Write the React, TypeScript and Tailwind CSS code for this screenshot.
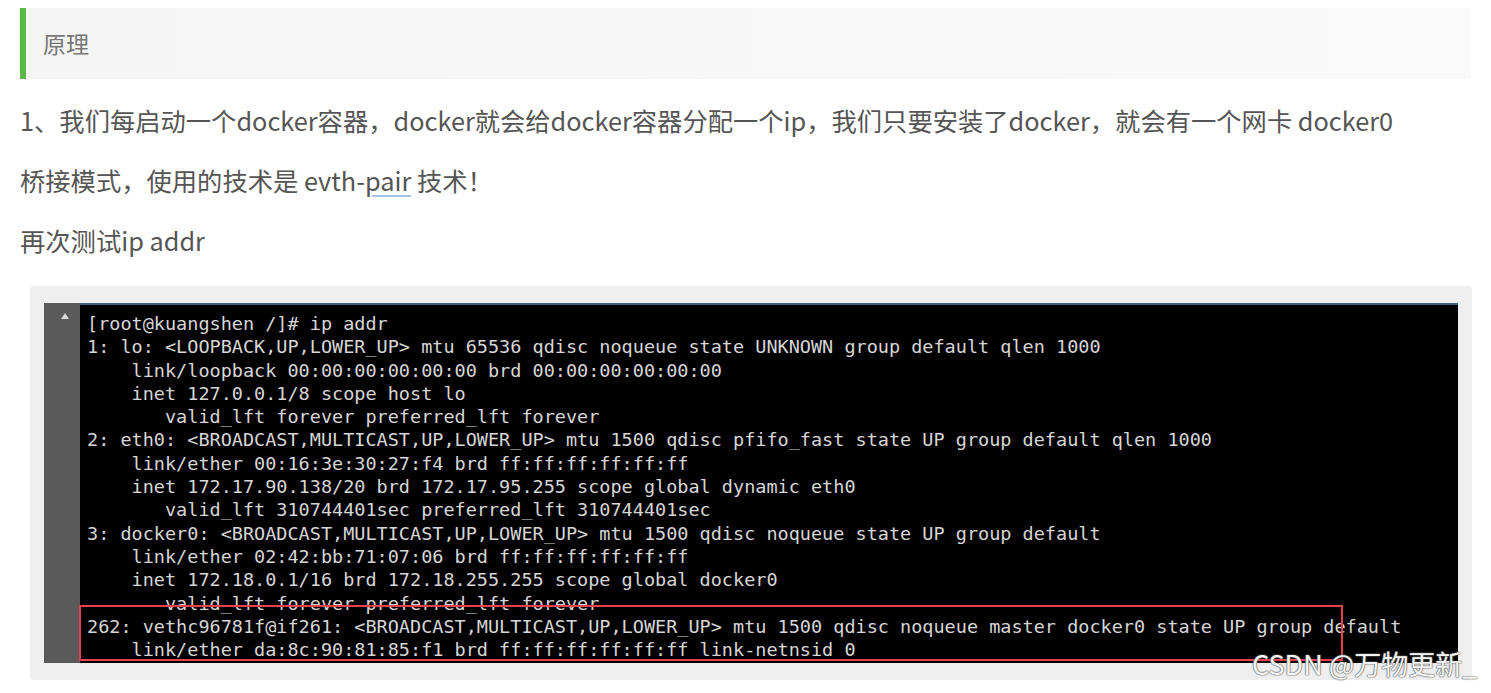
const lines = [
  "[root@kuangshen /]# ip addr",
  "1: lo: <LOOPBACK,UP,LOWER_UP> mtu 65536 qdisc noqueue state UNKNOWN group default qlen 1000",
  "    link/loopback 00:00:00:00:00:00 brd 00:00:00:00:00:00",
  "    inet 127.0.0.1/8 scope host lo",
  "       valid_lft forever preferred_lft forever",
  "2: eth0: <BROADCAST,MULTICAST,UP,LOWER_UP> mtu 1500 qdisc pfifo_fast state UP group default qlen 1000",
  "    link/ether 00:16:3e:30:27:f4 brd ff:ff:ff:ff:ff:ff",
  "    inet 172.17.90.138/20 brd 172.17.95.255 scope global dynamic eth0",
  "       valid_lft 310744401sec preferred_lft 310744401sec",
  "3: docker0: <BROADCAST,MULTICAST,UP,LOWER_UP> mtu 1500 qdisc noqueue state UP group default",
  "    link/ether 02:42:bb:71:07:06 brd ff:ff:ff:ff:ff:ff",
  "    inet 172.18.0.1/16 brd 172.18.255.255 scope global docker0",
  "       valid_lft forever preferred_lft forever",
  "262: vethc96781f@if261: <BROADCAST,MULTICAST,UP,LOWER_UP> mtu 1500 qdisc noqueue master docker0 state UP group default",
  "    link/ether da:8c:90:81:85:f1 brd ff:ff:ff:ff:ff:ff link-netnsid 0",
];

export default function App() {
  return (
    <div className="relative w-[1491px] h-[693px] overflow-hidden bg-white font-['Noto_Sans_CJK_SC',sans-serif]">
      {/* blockquote heading */}
      <div className="mt-[8px] ml-[20px] mr-[20px] h-[71px] flex items-center border-l-[6px] border-[#5cb84a] bg-gradient-to-r from-[#f5f5f5] to-[#fafafa] pl-[17px]">
        <span className="text-[23px] text-[#777777]">原理</span>
      </div>

      <div className="mt-[11px] pl-[20px] text-[25.3px] text-[#555555]">
        <p className="h-[60px] leading-[60px] whitespace-nowrap">
          1、我们每启动一个docker容器，docker就会给docker容器分配一个ip，我们只要安装了docker，就会有一个网卡 docker0
        </p>
        <p className="h-[60px] leading-[60px] whitespace-nowrap">
          桥接模式，使用的技术是 evth-
          <span className="underline decoration-[#a9c4e4] underline-offset-4">pair</span> 技术！
        </p>
        <p className="h-[60px] leading-[60px] whitespace-nowrap">再次测试ip addr</p>
      </div>

      {/* terminal screenshot */}
      <div className="mt-[16px] ml-[30px] w-[1442px] bg-[#efefef] px-[14px] py-[17px] rounded-sm">
        <div className="flex h-[360px]">
          <div className="w-[36px] bg-[#5a5a5a] flex justify-center pt-[10px]">
            <div className="ml-[6px] w-0 h-0 border-l-[4px] border-r-[4px] border-b-[6px] border-l-transparent border-r-transparent border-b-[#d8d8d8]" />
          </div>
          <div className="relative flex-1 bg-black border-t-2 border-[#3d5f80] pl-[7px] pt-[7px]">
            <div className="font-['DejaVu_Sans_Mono',monospace] text-[18.5px] leading-[23.3px] text-[#d6d6d6] whitespace-pre">
              {lines.map((l, i) => (
                <div key={i}>{l}</div>
              ))}
            </div>
            <div className="absolute left-[-1px] top-[300px] w-[1264px] h-[56px] border-2 border-[#e8404f]" />
          </div>
        </div>
      </div>

      <div className="absolute left-[1252px] top-[644px] text-[27px] leading-[40px] text-[#f4f4f4] [text-shadow:0_0_1px_#555,0_0_1px_#555,0_0_2px_#888] whitespace-nowrap">
        CSDN @万物更新_
      </div>
    </div>
  );
}
